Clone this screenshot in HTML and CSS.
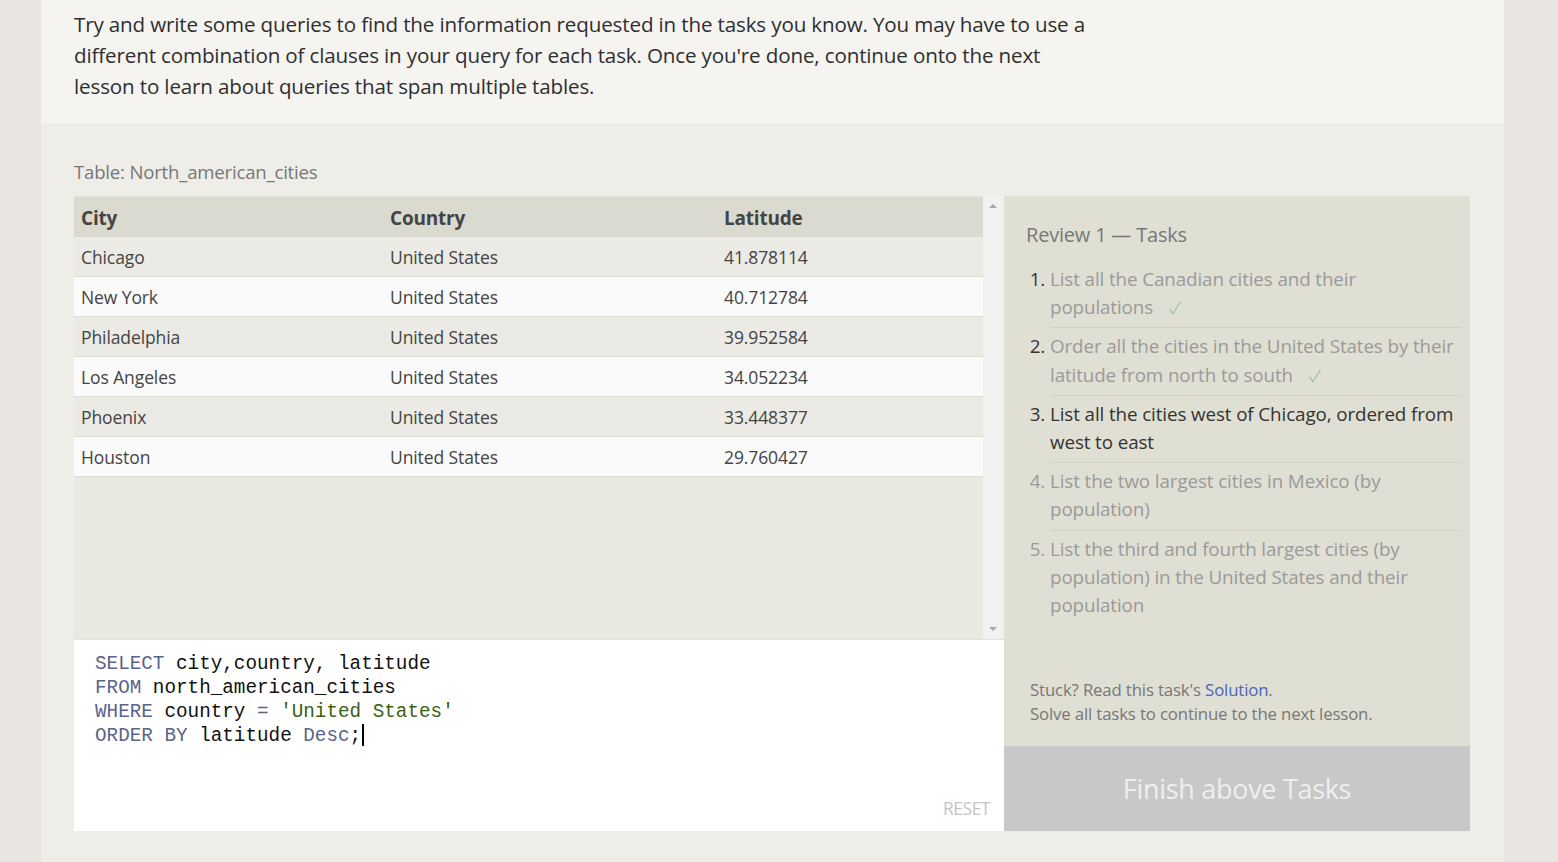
FILE: index.html
```html
<!DOCTYPE html>
<html>
<head>
<meta charset="utf-8">
<link rel="stylesheet" href="styles.css">
</head>
<body>
<div class="page">
  <div class="intro">
    <p>Try and write some queries to find the information requested in the tasks you know. You may have to use a different combination of clauses in your query for each task. Once you're done, continue onto the next lesson to learn about queries that span multiple tables.</p>
  </div>
  <div class="exercise">
    <div class="table-label">Table: North_american_cities</div>
    <div class="workspace">
      <div class="left">
        <div class="results">
          <div class="table-wrap">
            <table class="data">
              <thead>
                <tr><th class="c1">City</th><th class="c2">Country</th><th class="c3">Latitude</th></tr>
              </thead>
              <tbody>
                <tr class="odd"><td>Chicago</td><td>United States</td><td>41.878114</td></tr>
                <tr class="even"><td>New York</td><td>United States</td><td>40.712784</td></tr>
                <tr class="odd"><td>Philadelphia</td><td>United States</td><td>39.952584</td></tr>
                <tr class="even"><td>Los Angeles</td><td>United States</td><td>34.052234</td></tr>
                <tr class="odd"><td>Phoenix</td><td>United States</td><td>33.448377</td></tr>
                <tr class="even"><td>Houston</td><td>United States</td><td>29.760427</td></tr>
              </tbody>
            </table>
          </div>
          <div class="scrollbar">
            <svg width="20" height="12" viewBox="0 0 20 12"><path d="M6 9 L10 5 L14 9 Z" fill="#a8a8a8"/></svg>
            <svg width="20" height="12" viewBox="0 0 20 12"><path d="M6 3 L10 7 L14 3 Z" fill="#a8a8a8"/></svg>
          </div>
        </div>
        <div class="editor">
          <pre class="code"><span class="kw">SELECT</span> city,country, latitude
<span class="kw">FROM</span> north_american_cities
<span class="kw">WHERE</span> country <span class="op">=</span> <span class="str">'United States'</span>
<span class="kw">ORDER BY</span> latitude <span class="kw">Desc</span>;<span class="caret"></span></pre>
          <div class="reset">RESET</div>
        </div>
      </div>
      <div class="right">
        <div class="tasks">
          <h3 class="tasks-title">Review 1 — Tasks</h3>
          <ol class="task-list">
            <li class="done">List all the Canadian cities and their populations <svg class="check" width="14" height="16" viewBox="0 0 14 16"><polyline points="1.5,9 5,13.5 12.5,1.5" fill="none" stroke="#9ccb9c" stroke-width="1.3"/></svg></li>
            <li class="done">Order all the cities in the United States by their latitude from north to south <svg class="check" width="14" height="16" viewBox="0 0 14 16"><polyline points="1.5,9 5,13.5 12.5,1.5" fill="none" stroke="#9ccb9c" stroke-width="1.3"/></svg></li>
            <li class="current">List all the cities west of Chicago, ordered from west to east</li>
            <li class="todo">List the two largest cities in Mexico (by population)</li>
            <li class="todo">List the third and fourth largest cities (by population) in the United States and their population</li>
          </ol>
          <div class="hint">
            <p>Stuck? Read this task's <a class="solution">Solution</a>.</p>
            <p>Solve all tasks to continue to the next lesson.</p>
          </div>
        </div>
        <div class="finish">Finish above Tasks</div>
      </div>
    </div>
  </div>
</div>
</body>
</html>
```

FILE: styles.css
```css
html, body {
  margin: 0;
  padding: 0;
}
body {
  background: #e8e5e2;
  font-family: "Open Sans", "Noto Sans", sans-serif;
  color: #333;
  height: 862px;
  overflow: hidden;
}
.page {
  margin-left: 41px;
  width: 1463px;
  height: 862px;
  background: #efede7;
}
.intro {
  background: #f5f4f1;
  height: 123px;
  padding: 0 33px;
  box-sizing: border-box;
}
.intro p {
  margin: 0;
  padding-top: 9px;
  width: 1018px;
  font-size: 20.6px;
  line-height: 31px;
  color: #2e2e2e;
  letter-spacing: -0.15px;
}
.exercise {
  padding: 35px 33px 0 33px;
}
.table-label {
  font-size: 18.6px;
  color: #777;
  line-height: 28px;
  height: 38px;
  letter-spacing: -0.2px;
}
.workspace {
  display: flex;
  width: 1396px;
}
.left {
  width: 930px;
  display: flex;
  flex-direction: column;
}
.results {
  display: flex;
  height: 443px;
  background: #e9e8e1;
}
.table-wrap {
  width: 909px;
  border-top: 1px solid #e5e4dd;
}
.scrollbar {
  width: 21px;
  background: #f1f1f1;
  display: flex;
  flex-direction: column;
  justify-content: space-between;
  padding: 3px 0 3px 0;
  box-sizing: border-box;
}
.scrollbar svg { display: block; }
table.data {
  width: 909px;
  border-collapse: collapse;
  table-layout: fixed;
}
table.data th {
  background: #dbdad0;
  text-align: left;
  font-weight: bold;
  font-size: 19px;
  color: #444;
  height: 38px;
  padding: 2px 7px 0 7px;
  letter-spacing: -0.2px;
}
.c1 { width: 295px; }
.c2 { width: 320px; }
table.data td {
  font-size: 17.5px;
  color: #444;
  height: 38px;
  padding: 1px 7px 0 7px;
  border-bottom: 1px solid #dddcd4;
  letter-spacing: -0.1px;
}
tr.odd td { background: #ebeae4; }
tr.even td { background: #fafafa; }
.editor {
  background: #fff;
  height: 192px;
  width: 930px;
  box-sizing: border-box;
  border-top: 1px solid #e2e1da;
  position: relative;
  padding: 12px 21px;
}
.code {
  margin: 0;
  font-family: "Liberation Mono", "DejaVu Sans Mono", monospace;
  font-size: 19.3px;
  line-height: 24px;
  color: #111;
}
.kw { color: #5a6389; }
.op { color: #5a6389; }
.str { color: #386214; }
.caret {
  display: inline-block;
  width: 2px;
  height: 22px;
  background: #000;
  vertical-align: -5px;
  margin-left: 1px;
}
.reset {
  position: absolute;
  right: 14px;
  bottom: 11px;
  font-size: 17.5px;
  color: #c4c4c4;
  letter-spacing: -0.5px;
}
.right {
  width: 466px;
  display: flex;
  flex-direction: column;
}
.tasks {
  background: #e0dfd4;
  flex: 1;
  padding: 24px 9px 0 22px;
  box-sizing: border-box;
  display: flex;
  flex-direction: column;
}
.tasks-title {
  margin: 0 0 11px 0;
  font-weight: normal;
  font-size: 20px;
  color: #777;
  line-height: 30px;
  letter-spacing: -0.2px;
}
.task-list {
  margin: 0;
  padding: 0 0 0 24px;
  font-size: 18.8px;
  line-height: 28.2px;
  letter-spacing: -0.1px;
}
.task-list li {
  border-bottom: 1px solid #d3d2c7;
  padding: 4px 0 6px 0;
  color: #9a9a9a;
}
.task-list li:last-child { border-bottom: none; }
.task-list li::marker { color: #333; }
.task-list li.todo::marker { color: #9a9a9a; }
.task-list li.current { color: #333; }
.check {
  display: inline-block;
  margin-left: 10px;
  vertical-align: -2px;
}
.hint {
  margin-top: auto;
  padding: 0 0 20px 4px;
  font-size: 16.8px;
  color: #777;
  line-height: 24px;
  letter-spacing: -0.15px;
}
.hint p { margin: 0; }
.solution { color: #4c63b6; }
.finish {
  height: 85px;
  background: #c8c8c8;
  color: #efefef;
  font-size: 27px;
  display: flex;
  align-items: center;
  justify-content: center;
  letter-spacing: -0.3px;
}
```
